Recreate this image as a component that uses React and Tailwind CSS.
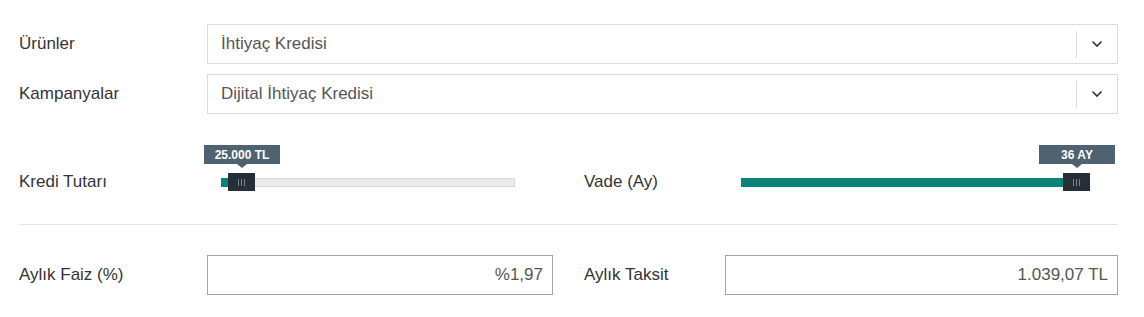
import React from "react";

function Chevron() {
  return (
    <svg width="12" height="8" viewBox="0 0 12 8" fill="none">
      <polyline points="1.5,1.5 6,6 10.5,1.5" stroke="#333" strokeWidth="1.6" fill="none" />
    </svg>
  );
}

function Select({ label, value, className = "" }) {
  return (
    <div className={`flex items-center h-[40px] ${className}`}>
      <div className="w-[188px] shrink-0 text-[17px] text-[#333]">{label}</div>
      <div className="flex-1 h-full border border-[#dcdcdc] flex items-center bg-white">
        <div className="flex-1 pl-[13px] text-[17px] text-[#555]">{value}</div>
        <div className="w-px h-[27px] bg-[#dcdcdc]" />
        <div className="w-[40px] flex items-center justify-center">
          <Chevron />
        </div>
      </div>
    </div>
  );
}

function Grip() {
  return (
    <div className="flex gap-[2px] items-center">
      <span className="block w-px h-[7px] bg-[#7d868f]" />
      <span className="block w-px h-[7px] bg-[#7d868f]" />
      <span className="block w-px h-[7px] bg-[#7d868f]" />
    </div>
  );
}

function Slider({ width, handleLeft, tip, trackClass }) {
  const center = handleLeft + 13.5;
  return (
    <div className={`relative h-[46px] pt-[33px] ${trackClass}`} style={{ width }}>
      <div className="relative h-[9px] border border-[#d9d9d9] bg-[#ebebeb]">
        <div
          className="absolute -left-px -top-px -bottom-px bg-[#0b837a]"
          style={{ width: center }}
        />
      </div>
      <div
        className="absolute top-[28px] w-[27px] h-[18px] bg-[#262f38] flex items-center justify-center"
        style={{ left: handleLeft }}
      >
        <Grip />
      </div>
      <div
        className="absolute top-0 w-[76px] h-[19px] bg-[#4f6272] flex items-center justify-center text-[12px] font-bold text-white leading-none"
        style={{ left: Math.round(center - 38) }}
      >
        {tip}
        <span className="absolute left-1/2 -translate-x-1/2 top-full w-0 h-0 border-l-[5px] border-r-[5px] border-t-[4px] border-l-transparent border-r-transparent border-t-[#4f6272]" />
      </div>
    </div>
  );
}

function Output({ label, labelW, value }) {
  return (
    <div className="flex items-center h-[40px]">
      <div className="shrink-0 text-[17px] text-[#333]" style={{ width: labelW }}>
        {label}
      </div>
      <div className="flex-1 h-full border border-[#a3a3a3] flex items-center justify-end pr-[9px] text-[17px] text-[#555] bg-white">
        {value}
      </div>
    </div>
  );
}

export default function App() {
  return (
    <div className="w-full bg-white pt-[24px] pl-[19px] pr-[26px] pb-[22px] font-['Liberation_Sans',Arial,sans-serif]">
      <Select label="Ürünler" value="İhtiyaç Kredisi" />
      <Select label="Kampanyalar" value="Dijital İhtiyaç Kredisi" className="mt-[10px]" />

      <div className="mt-[31px] grid grid-cols-2 gap-[31px]">
        <div className="flex items-end">
          <div className="w-[188px] shrink-0 h-[18px] flex items-center text-[17px] text-[#333]">Kredi Tutarı</div>
          <Slider width={294} handleLeft={7} tip="25.000 TL" trackClass="ml-[14px]" />
        </div>
        <div className="flex items-end">
          <div className="w-[141px] shrink-0 h-[18px] flex items-center text-[17px] text-[#333]">Vade (Ay)</div>
          <Slider width={349} handleLeft={322} tip="36 AY" trackClass="ml-[16px]" />
        </div>
      </div>

      <div className="mt-[33px] h-px bg-[#e3e3e3]" />

      <div className="mt-[30px] grid grid-cols-2 gap-[31px]">
        <Output label="Aylık Faiz (%)" labelW={188} value="%1,97" />
        <Output label="Aylık Taksit" labelW={141} value="1.039,07 TL" />
      </div>
    </div>
  );
}
